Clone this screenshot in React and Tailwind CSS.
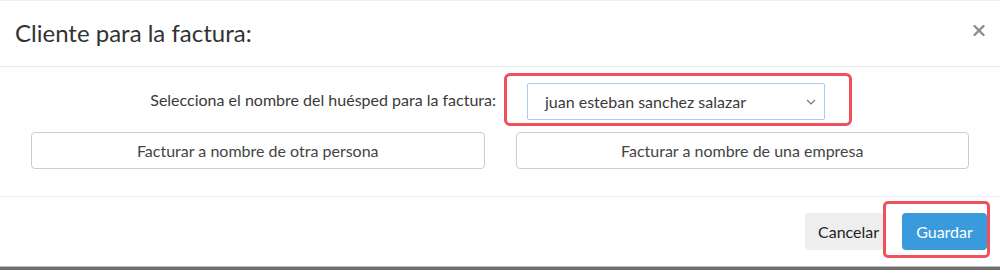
import React, { useState } from "react";

const lato = { fontFamily: "Lato, 'Open Sans', sans-serif" };

const ClienteFacturaModal = () => {
  const [huesped, setHuesped] = useState("juan esteban sanchez salazar");

  return (
    <div
      className="w-[1000px] h-[270px] bg-white flex flex-col border-t border-[#f0f0f0] text-[#333]"
      style={lato}
    >
      {/* header */}
      <div className="h-[66px] shrink-0 flex items-center justify-between pl-[15px] pr-[15px] border-b border-[#e9e9e9]">
        <h4 className="text-[24px] leading-none text-[#333] mt-[-1px]">
          Cliente para la factura:
        </h4>
        <button className="w-[12px] h-[12px] flex items-center justify-center mt-[-7px]">
          <svg width="12" height="11" viewBox="0 0 12 11">
            <path
              d="M1.5 1 L10.5 10 M10.5 1 L1.5 10"
              stroke="#8c8c8c"
              strokeWidth="2.4"
              strokeLinecap="round"
            />
          </svg>
        </button>
      </div>

      {/* body */}
      <div className="shrink-0 pt-[6px] pb-[27px] border-b border-[#ececec]">
        <div className="grid grid-cols-2 items-center">
          <label className="text-right pr-[4px] text-[16px] text-[#3a3a3a]">
            Selecciona el nombre del huésped para la factura:
          </label>
          <div className="pl-[4px]">
            <div className="w-[348px] h-[53px] border-[3px] border-[#f0505a] rounded-[6px] pl-[20px] pt-[7px]">
              <div className="w-[298px] h-[37px] border border-[#a9cbf7] rounded-[2px] flex items-center justify-between pl-[17px] pr-[8px] bg-white">
                <span className="text-[16px] text-[#3a3a3a]">{huesped}</span>
                <svg width="10" height="6" viewBox="0 0 10 6">
                  <path
                    d="M1 1 L5 5 L9 1"
                    fill="none"
                    stroke="#777"
                    strokeWidth="1.2"
                  />
                </svg>
              </div>
            </div>
          </div>
        </div>

        <div className="grid grid-cols-2 gap-[31px] px-[31px] mt-[6px]">
          <button className="h-[37px] border border-[#cccccc] rounded-[4px] text-[16px] text-[#444] bg-white">
            Facturar a nombre de otra persona
          </button>
          <button className="h-[37px] border border-[#cccccc] rounded-[4px] text-[16px] text-[#444] bg-white">
            Facturar a nombre de una empresa
          </button>
        </div>
      </div>

      {/* footer */}
      <div className="flex-1 flex justify-end items-start pr-[10px] pt-[4px]">
        <button className="mt-[12px] h-[37px] w-[78px] bg-[#eeeeee] rounded-l-[4px] pl-[13px] text-left text-[16px] text-[#222]">
          Cancelar
        </button>
        <div className="w-[107px] h-[57px] border-[3px] border-[#f0505a] rounded-[5px] pl-[16px] pt-[9px]">
          <button className="w-[85px] h-[37px] bg-[#3a9bdc] rounded-[4px] text-white text-[16px]">
            Guardar
          </button>
        </div>
      </div>

      <div className="h-[1px] bg-[#bdbdbd] shrink-0" />
      <div className="h-[3px] bg-[#6e6e6e] shrink-0" />
    </div>
  );
};

export default function App() {
  return <ClienteFacturaModal />;
}
